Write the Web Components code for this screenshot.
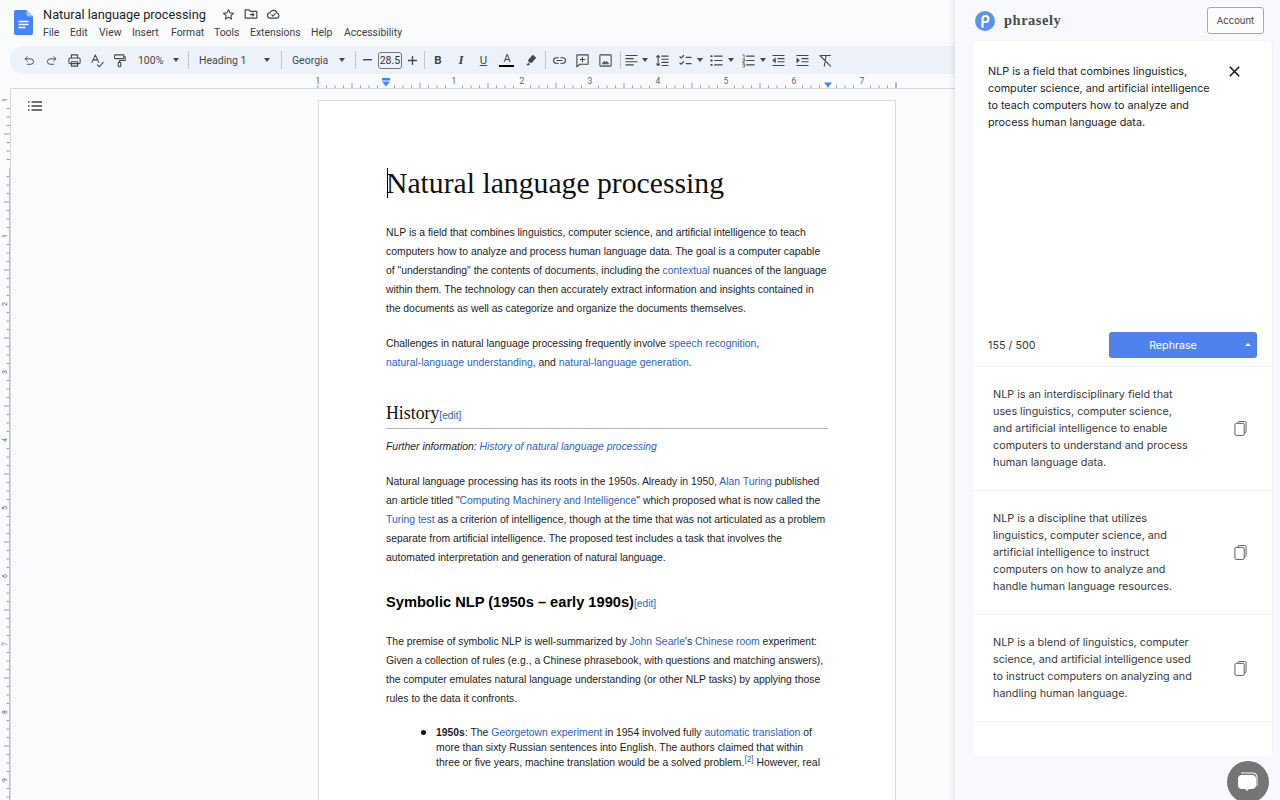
<!DOCTYPE html>
<html lang="en"><head><meta charset="utf-8"><title>Docs</title>
<style>
html,body{margin:0;padding:0;width:1280px;height:800px;overflow:hidden;background:#f9fbfd}
body{font-family:"Liberation Sans",sans-serif}
</style></head><body>
<app-shell>
  <docs-pane slot="docs">
    <docs-header slot="header"></docs-header>
    <docs-toolbar slot="toolbar"></docs-toolbar>
    <docs-ruler slot="ruler"></docs-ruler>
    <docs-vruler slot="vruler"></docs-vruler>
    <docs-outline slot="outline"></docs-outline>
    <doc-page slot="page">
      <doc-title>Natural language processing</doc-title>
      <doc-p>NLP is a field that combines linguistics, computer science, and artificial intelligence to teach<br>computers how to analyze and process human language data. The goal is a computer capable<br>of "understanding" the contents of documents, including the <doc-a>contextual</doc-a> nuances of the language<br>within them. The technology can then accurately extract information and insights contained in<br>the documents as well as categorize and organize the documents themselves.</doc-p>
      <doc-p>Challenges in natural language processing frequently involve <doc-a>speech recognition</doc-a>,<br><doc-a>natural-language understanding</doc-a>, and <doc-a>natural-language generation</doc-a>.</doc-p>
      <doc-h2>History<doc-edit>[edit]</doc-edit></doc-h2>
      <doc-p style="margin-top:8px;font-style:italic">Further information: <doc-a>History of natural language processing</doc-a></doc-p>
      <doc-p>Natural language processing has its roots in the 1950s. Already in 1950, <doc-a>Alan Turing</doc-a> published<br>an article titled "<doc-a>Computing Machinery and Intelligence</doc-a>" which proposed what is now called the<br><doc-a>Turing test</doc-a> as a criterion of intelligence, though at the time that was not articulated as a problem<br>separate from artificial intelligence. The proposed test includes a task that involves the<br>automated interpretation and generation of natural language.</doc-p>
      <doc-h3>Symbolic NLP (1950s – early 1990s)<doc-edit>[edit]</doc-edit></doc-h3>
      <doc-p>The premise of symbolic NLP is well-summarized by <doc-a>John Searle</doc-a>'s <doc-a>Chinese room</doc-a> experiment:<br>Given a collection of rules (e.g., a Chinese phrasebook, with questions and matching answers),<br>the computer emulates natural language understanding (or other NLP tasks) by applying those<br>rules to the data it confronts.</doc-p>
      <doc-li><b>1950s</b>: The <doc-a>Georgetown experiment</doc-a> in 1954 involved fully <doc-a>automatic translation</doc-a> of<br>more than sixty Russian sentences into English. The authors claimed that within<br>three or five years, machine translation would be a solved problem.<doc-sup>[2]</doc-sup> However, real</doc-li>
    </doc-page>
  </docs-pane>
  <phrasely-panel slot="panel">
    <phrasely-result>NLP is an interdisciplinary field that<br>uses linguistics, computer science,<br>and artificial intelligence to enable<br>computers to understand and process<br>human language data.</phrasely-result>
    <phrasely-result>NLP is a discipline that utilizes<br>linguistics, computer science, and<br>artificial intelligence to instruct<br>computers on how to analyze and<br>handle human language resources.</phrasely-result>
    <phrasely-result>NLP is a blend of linguistics, computer<br>science, and artificial intelligence used<br>to instruct computers on analyzing and<br>handling human language.</phrasely-result>
  </phrasely-panel>
  <chat-bubble slot="chat"></chat-bubble>
</app-shell>
<script>
const def=(name,html)=>customElements.define(name,class extends HTMLElement{constructor(){super();this.attachShadow({mode:'open'}).innerHTML=typeof html==='function'?html():html}});
const ic=(w,body,extra='')=>`<svg width="${w}" height="${w}" viewBox="0 0 24 24" fill="none" stroke="#444746" stroke-width="1.700" stroke-linecap="round" stroke-linejoin="round" ${extra}>${body}</svg>`;

def('app-shell',`<style>:host{display:flex;width:1280px;height:800px;position:relative;overflow:hidden}
::slotted([slot=docs]){flex:0 0 955px}::slotted([slot=panel]){flex:0 0 325px}</style>
<slot name="docs"></slot><slot name="panel"></slot><slot name="chat"></slot>`);

def('docs-pane',`<style>:host{display:grid;grid-template-columns:10px 1fr;grid-template-rows:46px 28px 14px 1fr;height:800px;overflow:hidden;background:#f9fbfd}
.top{grid-column:1/3;min-width:0}
.canvas{display:flex;align-items:flex-start;border-top:1px solid #d5d8dc;border-left:1px solid #d5d8dc;overflow:hidden;min-height:0}
</style>
<div class="top"><slot name="header"></slot></div>
<div class="top"><slot name="toolbar"></slot></div>
<div class="top"><slot name="ruler"></slot></div>
<div style="overflow:hidden;min-height:0"><slot name="vruler"></slot></div>
<div class="canvas"><slot name="outline"></slot><slot name="page"></slot></div>`);

def('docs-header',`<style>:host{display:flex;height:46px;padding-left:14px;box-sizing:border-box;font-family:Roboto,sans-serif;color:#1f1f1f}
.logo{margin-top:10px;flex:none}
.col{margin-left:10px;padding-top:4px}
.t{display:flex;align-items:center;height:20px;font-size:12.800px;white-space:nowrap}
.t svg{flex:none}
.m{display:flex;font-size:10.400px;height:16px;align-items:center;color:#3c4043;white-space:nowrap}
.m span{display:block}
</style>
<svg class="logo" width="19" height="25" viewBox="0 0 19 25"><path d="M2 0h10.500l6.500 6.500V23a2 2 0 0 1-2 2H2a2 2 0 0 1-2-2V2a2 2 0 0 1 2-2z" fill="#4285f4"/><path d="M12.500 0v4.500a2 2 0 0 0 2 2H19z" fill="#a1c2fa"/><path d="M4.500 11.500h10M4.500 14.500h10M4.500 17.500h7" stroke="#fff" stroke-width="1.500"/></svg>
<div class="col">
<div class="t"><span>Natural language processing</span>
<svg style="margin-left:16px" width="13" height="13" viewBox="0 0 24 24" fill="none" stroke="#444746" stroke-width="2" stroke-linejoin="round"><path d="M12 3l2.700 6 6.500.7-4.900 4.300 1.400 6.400L12 17.100 6.300 20.400l1.400-6.400L2.800 9.700 9.300 9z"/></svg>
<svg style="margin-left:9px" width="14" height="14" viewBox="0 0 24 24" fill="none" stroke="#444746" stroke-width="2" stroke-linejoin="round"><path d="M2 5h7l2 2.500h11V19H2z"/><path d="M10 13h7M14 10l3 3-3 3"/></svg>
<svg style="margin-left:8px" width="15" height="14" viewBox="0 0 24 24" fill="none" stroke="#444746" stroke-width="2" stroke-linejoin="round" stroke-linecap="round"><path d="M6.500 19a4.500 4.500 0 0 1-.6-9 6.500 6.500 0 0 1 12.400 0.800A4.200 4.200 0 0 1 18 19z"/><path d="M9 13.500l2 2 4-4"/></svg>
</div>
<div class="m"><span style="width:27px">File</span><span style="width:29px">Edit</span><span style="width:33px">View</span><span style="width:39px">Insert</span><span style="width:43px">Format</span><span style="width:36px">Tools</span><span style="width:61px">Extensions</span><span style="width:33px">Help</span><span>Accessibility</span></div>
</div>`);

const I={
undo:ic(13,'<path d="M8 5L4 9l4 4"/><path d="M4 9h10.500a5 5 0 0 1 0 10H8"/>'),
redo:ic(13,'<path d="M16 5l4 4-4 4"/><path d="M20 9H9.500a5 5 0 0 0 0 10H16"/>'),
print:ic(15,'<path d="M7 8V3h10v5"/><rect x="3" y="8" width="18" height="9" rx="2"/><rect x="7" y="14" width="10" height="7"/>'),
spell:ic(15,'<path d="M3 15L8.500 3 14 15M5 11h7"/><path d="M12 19l3 3 6-7"/>'),
paint:ic(15,'<rect x="4" y="3" width="15" height="6" rx="1"/><path d="M19 6h2v6h-9v3"/><rect x="10" y="15" width="4" height="7" rx="1"/>'),
link:ic(15,'<path d="M10 7.500H7a4.500 4.500 0 0 0 0 9h3M14 7.500h3a4.500 4.500 0 0 1 0 9h-3M8 12h8"/>'),
comment:ic(15,'<path d="M3 3h18v15H8l-5 4z"/><path d="M12 7v7M8.500 10.500h7"/>'),
image:ic(15,'<rect x="3" y="3" width="18" height="18" rx="1"/><path d="M7 17l3-4 2 2.500 2-2 3 3.500z" fill="#444746" stroke-width="1"/>'),
align:ic(15,'<path d="M3 4h18M3 9h12M3 14h18M3 19h12"/>'),
spacing:ic(15,'<path d="M11 5h10M11 10h10M11 15h10M11 20h10M5 4v16M2.500 6.500L5 4l2.500 2.500M2.500 17.500L5 20l2.500-2.500"/>'),
check:ic(15,'<path d="M3 6l2 2 4-4M3 16l2 2 4-4M13 7h8M13 17h8"/>'),
bullet:ic(15,'<path d="M9 5h12M9 12h12M9 19h12"/><path d="M3.500 5h1M3.500 12h1M3.500 19h1" stroke-width="3"/>'),
num:ic(15,'<path d="M9 5h12M9 12h12M9 19h12"/><path d="M3 3h2v5M3 10h3v3H3v3h3M3 18h3v4H3" stroke-width="1.200"/>'),
ind1:ic(15,'<path d="M3 4h18M11 9h10M11 14h10M3 20h18"/><path d="M7 8.500v7l-4-3.500z" fill="#444746" stroke-width="1"/>'),
ind2:ic(15,'<path d="M3 4h18M11 9h10M11 14h10M3 20h18"/><path d="M3 8.500v7l4-3.500z" fill="#444746" stroke-width="1"/>'),
clear:ic(15,'<path d="M5 4h15M13 4l-3 17M3 4l17 17"/>'),
hl:`<svg width="14" height="14" viewBox="0 0 24 24"><path d="M15 3l6 5-8 9-5-1-1-4z" fill="#444746"/><path d="M6 18l2-1 2 2-1 2H4z" fill="#444746"/></svg>`
};
const cell=(w,c,st='')=>`<span class="c" style="width:${w}px;${st}">${c}</span>`;
const car=(ml)=>`<i class="car" style="margin-left:${ml}px"></i>`;
const sep=(ml,mr)=>`<b class="sep" style="margin:0 ${mr}px 0 ${ml}px"></b>`;
def('docs-toolbar',`<style>:host{display:block;height:28px;margin-left:10px;background:#edf2fa;border-radius:14px 0 0 14px;overflow:hidden;font-family:Roboto,sans-serif;font-size:10.500px;color:#444746}
.r{display:flex;align-items:center;height:28px;padding-left:8px;white-space:nowrap}
.c{display:flex;flex:none;align-items:center;justify-content:center;height:28px}
.car{flex:none;display:block;width:0;height:0;border:3.500px solid transparent;border-top:4px solid #444746;border-bottom:0}
.sep{flex:none;display:block;width:1px;height:18px;background:#c7c7c7}
.box{flex:none;width:24px;height:17px;box-sizing:border-box;border:1px solid #747775;border-radius:3px;display:flex;align-items:center;justify-content:center;font-size:10.500px;color:#333}
</style><div class="r">
${cell(22.6,I.undo)}${cell(22.6,I.redo)}${cell(22.6,I.print)}${cell(22.6,I.spell)}${cell(22.6,I.paint)}
<span style="margin-left:7px;width:26px;flex:none">100%</span>${car(9)}${sep(9,10)}
<span style="width:46px;flex:none">Heading 1</span>${car(19)}${sep(11,10)}
<span style="width:37px;flex:none">Georgia</span>${car(10)}${sep(10,1)}
${cell(21,'<svg width="9" height="2"><rect width="9" height="1.400" fill="#444746"/></svg>')}<span class="box">28.5</span>${cell(21,'<svg width="9" height="9"><path d="M4.500 0v9M0 4.500h9" stroke="#444746" stroke-width="1.300"/></svg>')}${sep(1,0)}
${cell(24,'B','font-weight:700;font-size:11.500px;margin-left:1px')}${cell(22,'<i style="font-family:\'Liberation Serif\',serif;font-size:13px;font-weight:700">I</i>')}${cell(23,'<u style="font-size:11.500px">U</u>')}
${cell(24,'<span style="display:block;text-align:center;font-size:11px;line-height:11px;width:15px;border-bottom:2.500px solid #000;padding-bottom:1px">A</span>')}${cell(24,I.hl)}${sep(2,2.5)}
${cell(23,I.link)}${cell(23,I.comment)}${cell(23,I.image)}${sep(3,3)}
${cell(15,I.align)}${car(2.5)}${cell(15,I.spacing,'margin-left:7px')}${cell(15,I.check,'margin-left:8px')}${car(4)}${cell(15,I.bullet,'margin-left:6.500px')}${car(3.5)}${cell(15,I.num,'margin-left:7.500px')}${car(4)}${cell(15,I.ind1,'margin-left:5px')}${cell(15,I.ind2,'margin-left:9px')}${cell(15,I.clear,'margin-left:8px')}
</div>`);

def('docs-ruler',()=>{let s='';const x0=318,px=68/8;
for(let i=0;i<=68;i++){const x=x0+i*px,inch=i%8===0,half=i%4===0;
 if(inch)continue;s+=`<path d="M${x} 14v${half?-5:-2.500}" stroke="#9aa0a6" stroke-width="1"/>`}
const nums=[[318,'1'],[454,'1'],[522,'2'],[590,'3'],[658,'4'],[726,'5'],[794,'6'],[862,'7']];
nums.forEach(([x,t])=>s+=`<text x="${x}" y="10" font-size="8.500" text-anchor="middle" font-family="Roboto,sans-serif" fill="#5f6368">${t}</text>`);
s+=`<path d="M318 14v-3M896 14v-6" stroke="#9aa0a6"/>`;
s+=`<rect x="382" y="4" width="8" height="2.500" fill="#4285f4"/><path d="M382 7.500h8l-4 5z" fill="#4285f4"/><path d="M824 8.500h8l-4 5z" fill="#4285f4"/>`;
return `<style>:host{display:block;height:14px;overflow:hidden}</style><svg width="955" height="14" style="display:block">${s}</svg>`});

def('docs-vruler',()=>{let s='';const px=8.5;
for(let i=0;i<84;i++){const half=i%4===0;if(i%8===0)continue;s+=`<path d="M${half?4:6.500} ${12+i*px}H10" stroke="#9aa0a6"/>`}
[0,1,2,3,4,5,6,7,8,9,10].forEach((n,k)=>{const y=12+68*k;s+=`<text transform="translate(5,${y}) rotate(-90)" font-size="7" text-anchor="middle" dy="2" font-family="Roboto,sans-serif" fill="#5f6368">${k===0?1:k-1||''}</text>`});
s+=`<rect x="9" y="80" width="1" height="700" fill="#bdc1c6"/>`;
return `<style>:host{display:block;height:712px;overflow:hidden}</style><svg width="10" height="712" style="display:block">${s}</svg>`});

def('docs-outline',`<style>:host{display:block;flex:0 0 307px;padding:12px 0 0 17px;box-sizing:border-box;height:30px}svg{display:block}</style>
<svg width="14" height="10" viewBox="0 0 14 10"><path d="M3.500 1H14M3.500 5H14M3.500 9H14M0 1h1.500M0 5h1.500M0 9h1.500" stroke="#444746" stroke-width="1.300"/></svg>`);

def('doc-page',`<style>:host{display:block;margin-top:11px;width:578px;height:720px;box-sizing:border-box;background:#fff;border:1px solid #dadce0;padding:0 67px;color:#1c1c1c;font:10.400px/19px "Liberation Sans",sans-serif;white-space:nowrap;overflow:hidden}</style><slot></slot>`);
def('doc-title',`<style>:host{display:block;position:relative;margin:64px 0 22px;font:29.700px/36px "Liberation Serif",serif;color:#111}
i{position:absolute;left:1px;top:3px;width:1px;height:30px;background:#000}</style><i></i><slot></slot>`);
def('doc-p',`<style>:host{display:block;margin-top:16px}</style><slot></slot>`);
def('doc-a',`<style>:host{color:#2f5fc4}</style><slot></slot>`);
def('doc-h2',`<style>:host{display:block;margin-top:28px;font:17.800px/26px "Liberation Serif",serif;color:#111;border-bottom:1px solid #b5b5b5;padding-bottom:2px}</style><slot></slot>`);
def('doc-h3',`<style>:host{display:block;margin:25px 0 20px;font:700 14.650px/20px "Liberation Sans",sans-serif;color:#000}</style><slot></slot>`);
def('doc-edit',`<style>:host{font:10.200px "Liberation Sans",sans-serif;color:#2f5fc4}</style><slot></slot>`);
def('doc-sup',`<style>:host{font-size:8.200px;color:#2f5fc4;vertical-align:4px;line-height:0}</style><slot></slot>`);
def('doc-li',`<style>:host{display:block;position:relative;margin:17px 0 0 50px;line-height:15px}
i{position:absolute;left:-15px;top:5px;width:5px;height:5px;border-radius:50%;background:#111}</style><i></i><slot></slot>`);

def('phrasely-panel',`<style>:host{display:block;height:800px;box-sizing:border-box;padding:0 8px 0 18px;background:#f8f9fc;box-shadow:-2px 0 5px rgba(60,64,67,.12);position:relative;font-family:Inter,sans-serif;color:#2b2b2b}
.h{display:flex;align-items:center;height:41px;box-sizing:border-box}
.logo{flex:none;margin-left:2px}
.name{margin-left:9px;font:700 14.500px "Liberation Serif",serif;letter-spacing:.5px;color:#4a4a4a;flex:1}
.acc{flex:none;margin-right:8px;width:57px;height:27px;box-sizing:border-box;border:1px solid #a8a8a8;border-radius:3px;background:#fcfcfd;font:9.500px Inter,sans-serif;color:#444;display:flex;align-items:center;justify-content:center}
.card{background:#fff;height:715px;border-radius:3px;box-shadow:0 0 1px rgba(0,0,0,.12);box-sizing:border-box}
.in{height:288px;box-sizing:border-box;padding:22px 15px 0 15px;display:flex;justify-content:space-between;font-size:10.800px;line-height:17px;white-space:nowrap;color:#222}
.x{flex:none;margin:3px 17px 0 0}
.act{display:flex;align-items:center;justify-content:space-between;height:38px;padding:0 15px 5px;box-sizing:border-box;border-bottom:1px solid #f0f0f0;font-size:10.800px;color:#3a3a3a}
.btn{display:flex;align-items:center;width:148px;height:26px;background:#5082ed;border-radius:3px;color:#fff;font-size:10.700px;position:relative}
.btn span{flex:1;text-align:center;padding-right:20px}
.btn i{position:absolute;right:6px;top:11px;width:0;height:0;border:3px solid transparent;border-bottom:3.500px solid #fff;border-top:0}
</style>
<div class="h"><svg class="logo" width="20" height="20" viewBox="0 0 20 20"><circle cx="10" cy="10" r="10" fill="#5b93ee"/><path d="M7.500 16V8a3 3 0 1 1 3 3H9" fill="none" stroke="#fff" stroke-width="2.200" stroke-linecap="round"/></svg><span class="name">phrasely</span><span class="acc">Account</span></div>
<div class="card">
<div class="in"><div>NLP is a field that combines linguistics,<br>computer science, and artificial intelligence<br>to teach computers how to analyze and<br>process human language data.</div><svg class="x" width="11" height="11" viewBox="0 0 11 11"><path d="M.800.800l9.400 9.400M10.200.800L.800 10.200" stroke="#1a1a1a" stroke-width="1.600"/></svg></div>
<div class="act"><span>155 / 500</span><div class="btn"><span>Rephrase</span><i></i></div></div>
<slot></slot>
</div>`);
def('phrasely-result',`<style>:host{display:flex;align-items:center;justify-content:space-between;box-sizing:border-box;height:124px;padding:0 25px 0 20px;border-bottom:1px solid #f0f0f0;font-size:10.800px;line-height:17px;color:#3a3a3a;white-space:nowrap}
:host(:last-of-type){height:107px}svg{flex:none}</style><div><slot></slot></div>
<svg width="13" height="15" viewBox="0 0 14 16" fill="none" stroke="#555" stroke-width="1"><path d="M4 2.500V2a1.500 1.500 0 0 1 1.500-1.500h6A1.500 1.500 0 0 1 13 2v9a1.500 1.500 0 0 1-1.500 1.500H11"/><rect x="1" y="2.500" width="10" height="13" rx="1.500"/></svg>`);
def('chat-bubble',`<style>:host{display:block;position:absolute;left:1227px;top:761px;width:42px;height:42px;border-radius:50%;background:#757575}svg{display:block;margin:10px 0 0 9px}</style>
<svg width="24" height="22" viewBox="0 0 24 22"><path d="M5 2h12q4 0 4 4v9" fill="none" stroke="#fff" stroke-width="1"/><path d="M6 4h10q4 0 4 4v6q0 4-4 4h-3l-2 2-2-2H6q-4 0-4-4V8q0-4 4-4z" fill="#fff"/></svg>`);
</script>
</body></html>
